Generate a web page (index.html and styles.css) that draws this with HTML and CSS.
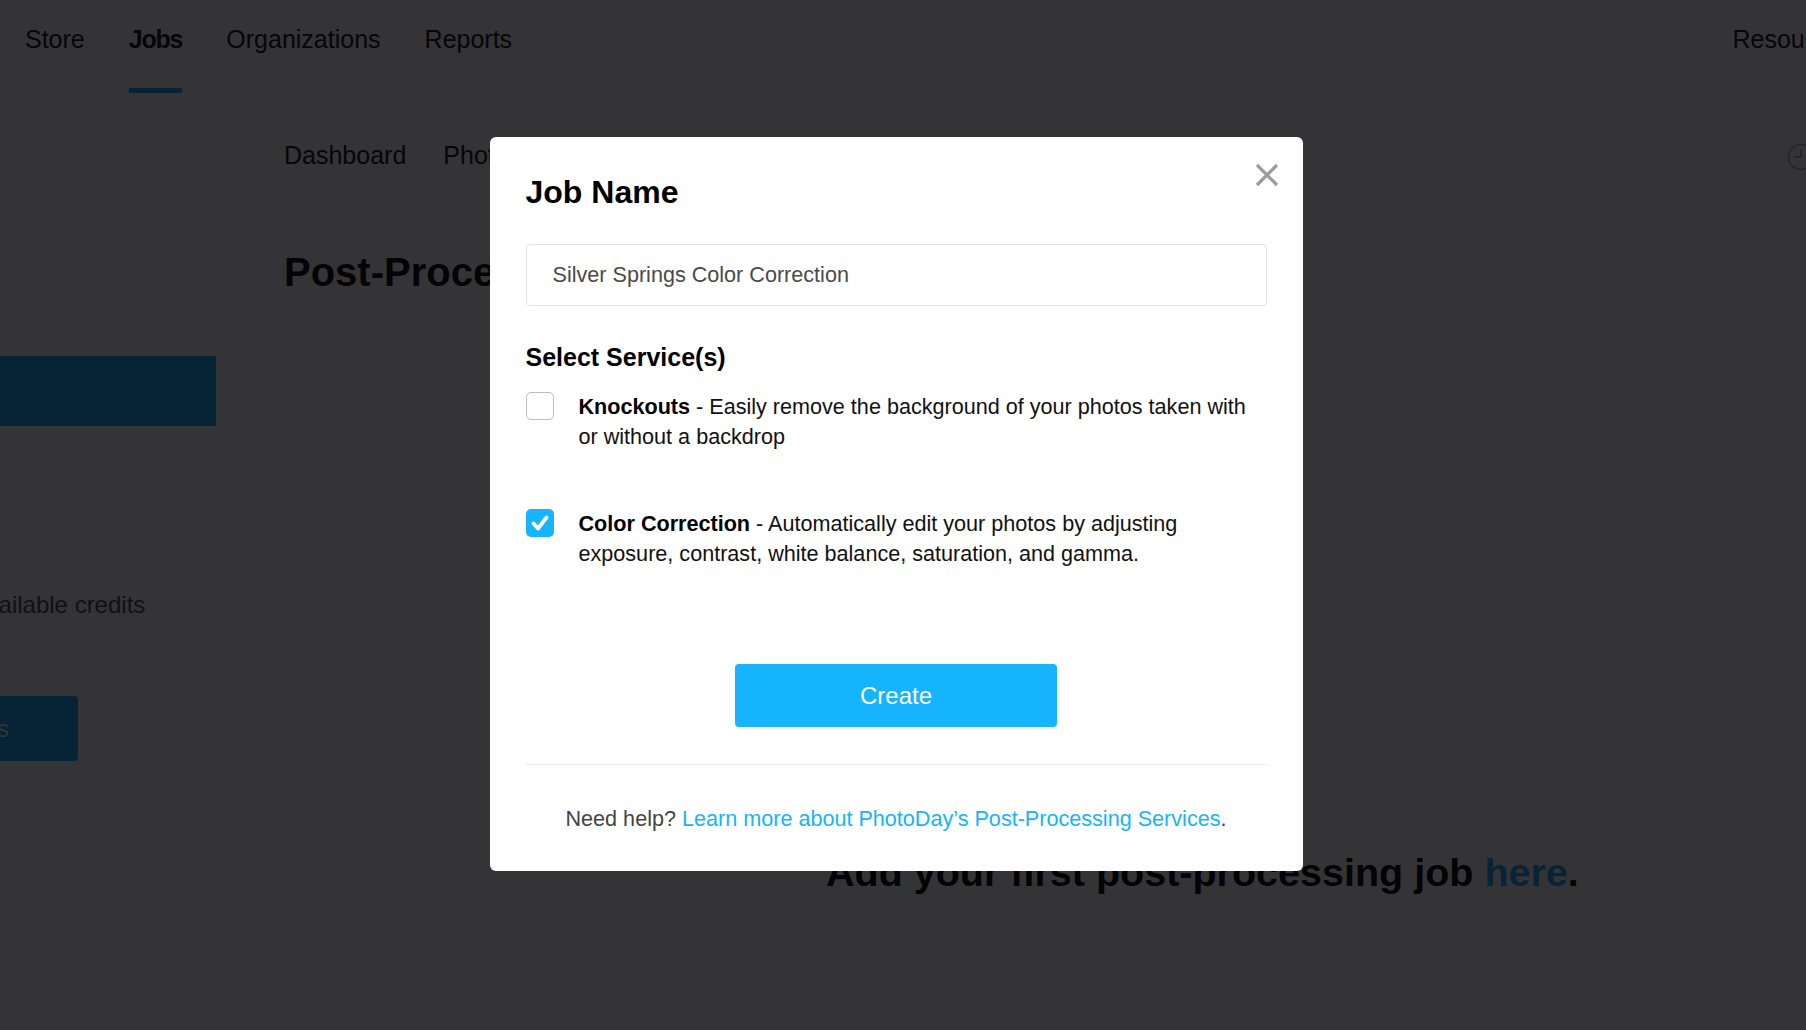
FILE: index.html
```html
<html>
<head>
    <title>PhotoDay - Post-Processing</title>
    <link rel="stylesheet" href="styles.css">
</head>

<body>
<div class="page">
    <nav class="topnav">
        <a href="#">Store</a>
        <a href="#" class="active">Jobs</a>
        <a href="#">Organizations</a>
        <a href="#">Reports</a>
        <a href="#" class="right">Resources</a>
    </nav>

    <div class="layout">
        <aside class="sidebar">
            <div class="side-link"></div>
            <div class="credits">
                <p>Available credits</p>
                <a href="#" class="buy">Buy Credits</a>
            </div>
        </aside>

        <main class="main">
            <div class="subnav">
                <a href="#">Dashboard</a>
                <a href="#">Photos</a>
                <span class="help-icon">
                    <svg width="28" height="28" viewBox="0 0 28 28">
                        <circle cx="14" cy="14" r="12.5" fill="none" stroke="#aaa" stroke-width="1.5"/>
                        <path d="M14 7v7H7" fill="none" stroke="#aaa" stroke-width="1.5"/>
                    </svg>
                </span>
            </div>
            <h1>Post-Processing</h1>
            <p class="empty">Add your first post-processing job <a href="#">here</a>.</p>
        </main>
    </div>
</div>

<div class="overlay">
    <div class="modal">
        <button class="close" aria-label="Close">
            <svg width="24" height="24" viewBox="0 0 24 24">
                <path d="M2 2L22 22M22 2L2 22" stroke="#9b9b9b" stroke-width="3.2"/>
            </svg>
        </button>

        <h2>Job Name</h2>
        <input class="field" type="text" value="Silver Springs Color Correction">

        <h3>Select Service(s)</h3>

        <label class="option">
            <span class="box"></span>
            <span class="desc"><b>Knockouts</b> - Easily remove the background of your photos taken with or without a backdrop</span>
        </label>

        <label class="option">
            <span class="box checked">
                <svg width="28" height="28" viewBox="0 0 28 28">
                    <path d="M7.5 14.5l4.5 5 8.5-11" fill="none" stroke="white" stroke-width="3.8" stroke-linecap="round" stroke-linejoin="round"/>
                </svg>
            </span>
            <span class="desc"><b>Color Correction</b> - Automatically edit your photos by adjusting exposure, contrast, white balance, saturation, and gamma.</span>
        </label>

        <div class="actions">
            <button class="create">Create</button>
        </div>

        <p class="help">Need help? <a href="#">Learn more about PhotoDay&rsquo;s Post-Processing Services</a>.</p>
    </div>
</div>
</body>

</html>
```

FILE: styles.css
```css
html, body {
    margin: 0;
    overflow: hidden;
}

body {
    font-family: "Liberation Sans", Arial, Helvetica, sans-serif;
    color: #222;
    background-color: white;
}

a {
    color: inherit;
    text-decoration: none;
}

.page {
    width: 1880px;
    height: 1030px;
}

.topnav {
    display: flex;
    gap: 44px;
    padding: 0 28px 0 25px;
    font-size: 25px;
}

.topnav a {
    padding: 24px 0 34px 0;
    line-height: 30px;
    border-bottom: 5px solid transparent;
}

.topnav a.active {
    font-weight: bold;
    letter-spacing: -1.2px;
    border-bottom-color: #1ab3fd;
}

.topnav a.right {
    margin-left: auto;
}

.layout {
    display: flex;
}

.sidebar {
    width: 216px;
    flex-shrink: 0;
    overflow: hidden;
}

.side-link {
    margin-top: 263px;
    height: 70px;
    background-color: #1ab3fd;
}

.credits {
    width: 400px;
    height: 248px;
    margin: 123px 0 0 -185px;
    box-sizing: border-box;
    border: 1px solid #f0f0f0;
    box-shadow: 0 1px 3px #00000008;
}

.credits p {
    margin: 40px 0 0 155px;
    font-size: 24px;
    line-height: 30px;
    color: #555;
}

.buy {
    display: block;
    width: 262px;
    height: 65px;
    margin-top: 76px;
    line-height: 65px;
    text-align: center;
    font-size: 24px;
    color: white;
    background-color: #1ab3fd;
    border-radius: 4px;
}

.main {
    flex: 1;
    margin-left: 68px;
    padding: 47px 65px 0 0;
}

.subnav {
    display: flex;
    align-items: center;
    gap: 37px;
    font-size: 25px;
    line-height: 30px;
}

.help-icon {
    margin-left: auto;
    display: flex;
    align-self: flex-end;
    margin-bottom: -1px;
}

.main h1 {
    margin: 78px 0 0 0;
    font-size: 40px;
    line-height: 48px;
    color: #111;
}

.empty {
    margin: 552px 0 0 0;
    padding-left: 542px;
    font-size: 39.5px;
    line-height: 48px;
    font-weight: bold;
    color: #111;
}

.empty a {
    color: #1ab3fd;
}

/* modal */

.overlay {
    position: fixed;
    top: 0;
    left: 0;
    right: 0;
    bottom: 0;
    display: flex;
    justify-content: center;
    align-items: flex-start;
    padding: 137px 14px 0 0;
    background-color: rgba(1, 0, 4, 0.8);
}

.modal {
    position: relative;
    width: 813px;
    box-sizing: border-box;
    padding: 37px 36px 37px 36px;
    background-color: white;
    border-radius: 6px;
}

.close {
    position: absolute;
    top: 26px;
    right: 24px;
    padding: 0;
    border: none;
    background: none;
    display: flex;
}

.modal h2 {
    margin: 0 0 33px 0;
    font-size: 32px;
    line-height: 37px;
    color: #000;
}

.field {
    display: block;
    width: 100%;
    height: 62px;
    box-sizing: border-box;
    padding: 0 26px;
    border: 1px solid #e3e3e3;
    border-radius: 4px;
    font-family: inherit;
    font-size: 21.6px;
    color: #4a4a4a;
    outline: none;
}

.modal h3 {
    margin: 36px 0 20px 0;
    font-size: 25px;
    line-height: 30px;
    color: #000;
}

.option {
    display: flex;
    gap: 25px;
    margin-bottom: 57px;
    font-size: 21.6px;
    line-height: 30px;
    color: #111;
}

.box {
    width: 28px;
    height: 28px;
    flex-shrink: 0;
    box-sizing: border-box;
    border: 1px solid #bdbdbd;
    border-radius: 5px;
}

.box.checked {
    border: none;
    background-color: #18b4ff;
}

.desc b {
    color: #000;
}

.actions {
    display: flex;
    justify-content: center;
    margin-top: 95px;
    padding-bottom: 37px;
    border-bottom: 1px solid #e9e9e9;
}

.create {
    width: 322px;
    height: 63px;
    border: none;
    border-radius: 4px;
    background-color: #17b4fe;
    color: white;
    font-family: inherit;
    font-size: 24px;
}

.help {
    margin: 39px 0 0 0;
    text-align: center;
    font-size: 21.6px;
    line-height: 30px;
    color: #444;
}

.help a {
    color: #17b4fe;
}
```
